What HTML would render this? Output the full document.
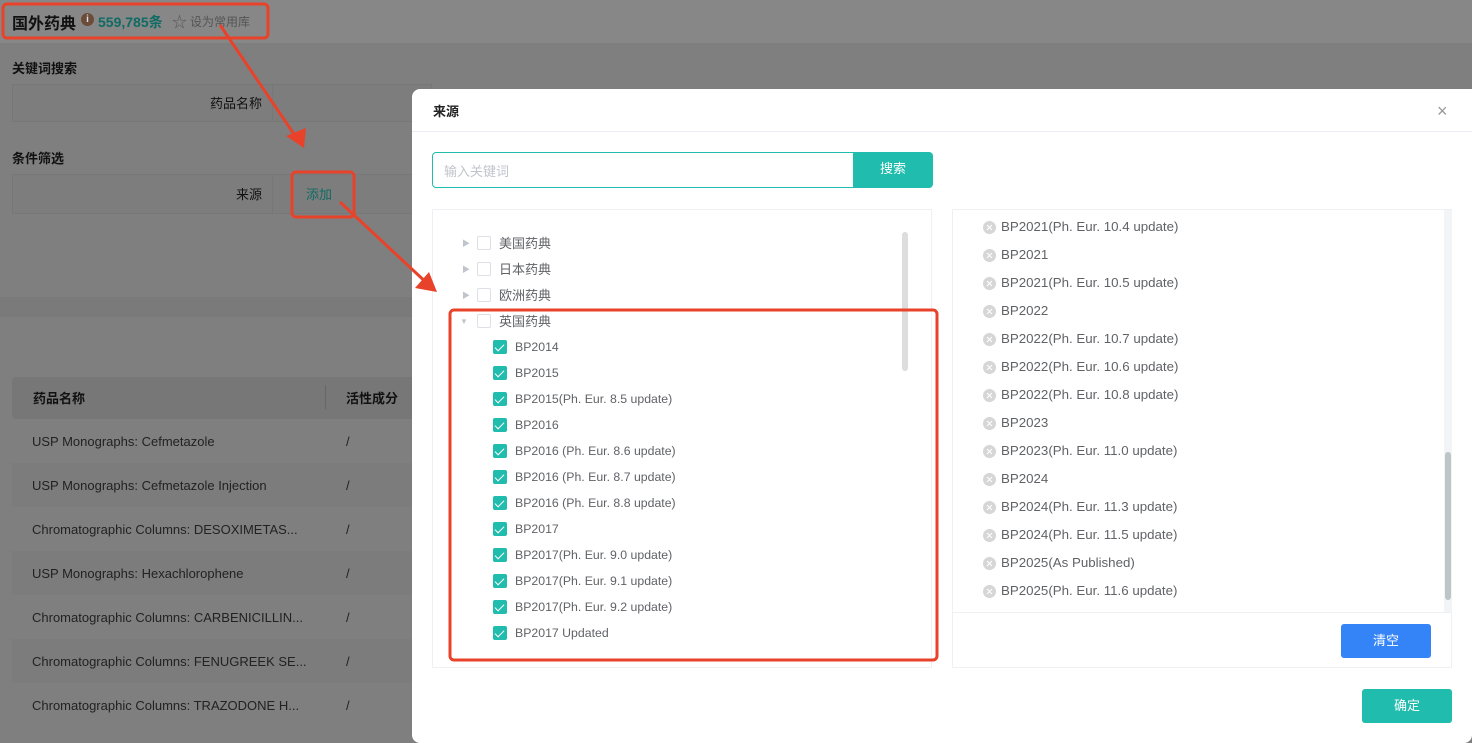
<!DOCTYPE html>
<html><head><meta charset="utf-8"><style>
*{margin:0;padding:0;box-sizing:border-box}
body{width:1472px;height:743px;overflow:hidden;background:#7f7f7f;font-family:"Liberation Sans","Noto Sans CJK SC",sans-serif;position:relative;color:#1a1a1a}
.a{position:absolute;white-space:nowrap}
.cb{position:absolute;width:14px;height:14px;border-radius:2px;background:#20bcad}
.cb::after{content:"";position:absolute;left:4px;top:1.5px;width:4px;height:8px;border:solid #fff;border-width:0 1.5px 1.5px 0;transform:rotate(45deg)}
.ub{position:absolute;width:14px;height:14px;border:1px solid #dcdfe6;border-radius:2px;background:#fff}
.t{font-size:12.3px;color:#606266}
.c{font-size:13px;color:#606266}
.x{position:absolute;width:13px;height:13px;border-radius:50%;background:#d6d6d6}
.x::before,.x::after{content:"";position:absolute;left:6px;top:3px;width:1px;height:7px;background:#fff;transform:rotate(45deg)}
.x::after{transform:rotate(-45deg)}
.r{font-size:13.3px;color:#606266}
</style></head><body>
<div class="a" style="left:0;top:0;width:1472px;height:43px;background:#878787"></div>
<div class="a" style="left:12px;top:10px;font-size:16px;font-weight:bold;color:#111">国外药典</div>
<div class="a" style="left:81px;top:13px;width:13px;height:13px;border-radius:50%;background:#6b4b3a;color:#ddd;font-size:10px;text-align:center;line-height:13px;font-weight:bold">i</div>
<div class="a" style="left:98px;top:12px;font-size:14px;font-weight:bold;color:#0f6b63">559,785条</div>
<div class="a" style="left:172px;top:11px;font-size:15px;color:#555">☆</div>
<div class="a" style="left:190px;top:13px;font-size:12px;color:#555">设为常用库</div>
<div class="a" style="left:12px;top:58px;font-size:13px;font-weight:bold;color:#111">关键词搜索</div>
<div class="a" style="left:12px;top:84px;width:420px;height:38px;border:1px solid #777;background:#7d7d7d"></div>
<div class="a" style="left:272px;top:84px;width:1px;height:38px;background:#777"></div>
<div class="a" style="left:210px;top:93px;font-size:13px;color:#111">药品名称</div>
<div class="a" style="left:12px;top:148px;font-size:13px;font-weight:bold;color:#111">条件筛选</div>
<div class="a" style="left:12px;top:174px;width:420px;height:40px;border:1px solid #777;background:#7d7d7d"></div>
<div class="a" style="left:272px;top:174px;width:1px;height:40px;background:#777"></div>
<div class="a" style="left:236px;top:184px;font-size:13px;color:#111">来源</div>
<div class="a" style="left:306px;top:184px;font-size:13px;color:#0f6b63">添加</div>
<div class="a" style="left:0;top:297px;width:420px;height:20px;background:#7a7a7a"></div>
<div class="a" style="left:12px;top:377px;width:410px;height:42px;background:#777;border-radius:4px 0 0 4px"></div>
<div class="a" style="left:325px;top:385px;width:1px;height:24px;background:#666"></div>
<div class="a" style="left:33px;top:388px;font-size:13px;font-weight:bold;color:#111">药品名称</div>
<div class="a" style="left:346px;top:388px;font-size:13px;font-weight:bold;color:#111">活性成分</div>
<div class="a" style="left:12px;top:463px;width:410px;height:44px;background:#7c7c7c"></div>
<div class="a" style="left:12px;top:551px;width:410px;height:44px;background:#7c7c7c"></div>
<div class="a" style="left:12px;top:639px;width:410px;height:44px;background:#7c7c7c"></div>
<div class="a" style="left:32px;top:434px;font-size:13px;color:#222">USP Monographs: Cefmetazole</div>
<div class="a" style="left:32px;top:478px;font-size:13px;color:#222">USP Monographs: Cefmetazole Injection</div>
<div class="a" style="left:32px;top:522px;font-size:13px;color:#222">Chromatographic Columns: DESOXIMETAS...</div>
<div class="a" style="left:32px;top:566px;font-size:13px;color:#222">USP Monographs: Hexachlorophene</div>
<div class="a" style="left:32px;top:610px;font-size:13px;color:#222">Chromatographic Columns: CARBENICILLIN...</div>
<div class="a" style="left:32px;top:654px;font-size:13px;color:#222">Chromatographic Columns: FENUGREEK SE...</div>
<div class="a" style="left:32px;top:698px;font-size:13px;color:#222">Chromatographic Columns: TRAZODONE H...</div>
<div class="a" style="left:346px;top:434px;font-size:13px;color:#222">/</div>
<div class="a" style="left:346px;top:478px;font-size:13px;color:#222">/</div>
<div class="a" style="left:346px;top:522px;font-size:13px;color:#222">/</div>
<div class="a" style="left:346px;top:566px;font-size:13px;color:#222">/</div>
<div class="a" style="left:346px;top:610px;font-size:13px;color:#222">/</div>
<div class="a" style="left:346px;top:654px;font-size:13px;color:#222">/</div>
<div class="a" style="left:346px;top:698px;font-size:13px;color:#222">/</div>

<div class="a" style="left:412px;top:89px;width:1060px;height:654px;background:#fff;border-radius:8px 0 8px 8px"></div>
<div class="a" style="left:433px;top:101px;font-size:13px;font-weight:bold;color:#222">来源</div>
<div class="a" style="left:1437px;top:101px;font-size:18px;color:#999">×</div>
<div class="a" style="left:412px;top:131px;width:1060px;height:1px;background:#ebeef5"></div>
<div class="a" style="left:432px;top:152px;width:500px;height:36px;border:1px solid #20bcad;border-radius:4px"></div>
<div class="a" style="left:444px;top:161px;font-size:13px;color:#c0c4cc">输入关键词</div>
<div class="a" style="left:853px;top:152px;width:80px;height:36px;background:#20bcad;border-radius:0 4px 4px 0;color:#fff;font-size:13px;text-align:center;line-height:34px">搜索</div>

<div class="a" style="left:432px;top:209px;width:500px;height:459px;border:1px solid #eef0f3"></div>
<div class="a" style="left:902px;top:232px;width:6px;height:139px;background:#ddd;border-radius:3px"></div>
<div class="a" style="left:462px;top:238px;font-size:8px;color:#c0c4cc">▶</div>
<div class="a" style="left:462px;top:264px;font-size:8px;color:#c0c4cc">▶</div>
<div class="a" style="left:462px;top:290px;font-size:8px;color:#c0c4cc">▶</div>
<div class="a" style="left:460px;top:317px;font-size:8px;color:#c0c4cc">▼</div>
<div class="ub" style="left:477px;top:236px"></div>
<div class="ub" style="left:477px;top:262px"></div>
<div class="ub" style="left:477px;top:288px"></div>
<div class="ub" style="left:477px;top:314px"></div>
<div class="a c" style="left:499px;top:233px">美国药典</div>
<div class="a c" style="left:499px;top:259px">日本药典</div>
<div class="a c" style="left:499px;top:285px">欧洲药典</div>
<div class="a c" style="left:499px;top:311px">英国药典</div>
<div class="cb" style="left:493px;top:340px"></div><div class="a t" style="left:515px;top:340px">BP2014</div>
<div class="cb" style="left:493px;top:366px"></div><div class="a t" style="left:515px;top:366px">BP2015</div>
<div class="cb" style="left:493px;top:392px"></div><div class="a t" style="left:515px;top:392px">BP2015(Ph. Eur. 8.5 update)</div>
<div class="cb" style="left:493px;top:418px"></div><div class="a t" style="left:515px;top:418px">BP2016</div>
<div class="cb" style="left:493px;top:444px"></div><div class="a t" style="left:515px;top:444px">BP2016 (Ph. Eur. 8.6 update)</div>
<div class="cb" style="left:493px;top:470px"></div><div class="a t" style="left:515px;top:470px">BP2016 (Ph. Eur. 8.7 update)</div>
<div class="cb" style="left:493px;top:496px"></div><div class="a t" style="left:515px;top:496px">BP2016 (Ph. Eur. 8.8 update)</div>
<div class="cb" style="left:493px;top:522px"></div><div class="a t" style="left:515px;top:522px">BP2017</div>
<div class="cb" style="left:493px;top:548px"></div><div class="a t" style="left:515px;top:548px">BP2017(Ph. Eur. 9.0 update)</div>
<div class="cb" style="left:493px;top:574px"></div><div class="a t" style="left:515px;top:574px">BP2017(Ph. Eur. 9.1 update)</div>
<div class="cb" style="left:493px;top:600px"></div><div class="a t" style="left:515px;top:600px">BP2017(Ph. Eur. 9.2 update)</div>
<div class="cb" style="left:493px;top:626px"></div><div class="a t" style="left:515px;top:626px">BP2017 Updated</div>

<div class="a" style="left:952px;top:209px;width:500px;height:459px;border:1px solid #eef0f3"></div>
<div class="a" style="left:952px;top:612px;width:500px;height:1px;background:#eef0f3"></div>
<div class="a" style="left:1444px;top:210px;width:8px;height:402px;background:#f3f4f5"></div>
<div class="a" style="left:1445px;top:452px;width:6px;height:148px;background:#bcc6c6;border-radius:3px"></div>
<div class="x" style="left:983px;top:221px"></div><div class="a r" style="left:1001px;top:219px">BP2021(Ph. Eur. 10.4 update)</div>
<div class="x" style="left:983px;top:249px"></div><div class="a r" style="left:1001px;top:247px">BP2021</div>
<div class="x" style="left:983px;top:277px"></div><div class="a r" style="left:1001px;top:275px">BP2021(Ph. Eur. 10.5 update)</div>
<div class="x" style="left:983px;top:305px"></div><div class="a r" style="left:1001px;top:303px">BP2022</div>
<div class="x" style="left:983px;top:333px"></div><div class="a r" style="left:1001px;top:331px">BP2022(Ph. Eur. 10.7 update)</div>
<div class="x" style="left:983px;top:361px"></div><div class="a r" style="left:1001px;top:359px">BP2022(Ph. Eur. 10.6 update)</div>
<div class="x" style="left:983px;top:389px"></div><div class="a r" style="left:1001px;top:387px">BP2022(Ph. Eur. 10.8 update)</div>
<div class="x" style="left:983px;top:417px"></div><div class="a r" style="left:1001px;top:415px">BP2023</div>
<div class="x" style="left:983px;top:445px"></div><div class="a r" style="left:1001px;top:443px">BP2023(Ph. Eur. 11.0 update)</div>
<div class="x" style="left:983px;top:473px"></div><div class="a r" style="left:1001px;top:471px">BP2024</div>
<div class="x" style="left:983px;top:501px"></div><div class="a r" style="left:1001px;top:499px">BP2024(Ph. Eur. 11.3 update)</div>
<div class="x" style="left:983px;top:529px"></div><div class="a r" style="left:1001px;top:527px">BP2024(Ph. Eur. 11.5 update)</div>
<div class="x" style="left:983px;top:557px"></div><div class="a r" style="left:1001px;top:555px">BP2025(As Published)</div>
<div class="x" style="left:983px;top:585px"></div><div class="a r" style="left:1001px;top:583px">BP2025(Ph. Eur. 11.6 update)</div>
<div class="a" style="left:1341px;top:624px;width:90px;height:34px;background:#3484f8;border-radius:3px;color:#fff;font-size:13px;text-align:center;line-height:34px">清空</div>
<div class="a" style="left:1362px;top:689px;width:90px;height:34px;background:#20bcad;border-radius:3px;color:#fff;font-size:13px;text-align:center;line-height:34px">确定</div>

<svg class="a" style="left:0;top:0" width="1472" height="743">
<g fill="none" stroke="#e8432a" stroke-width="3">
<rect x="3" y="4" width="265" height="34" rx="4"/>
<rect x="292" y="172" width="62" height="45" rx="4"/>
<rect x="450" y="310" width="487" height="350" rx="4"/>
<line x1="220" y1="25" x2="298" y2="140"/>
<line x1="340" y1="202" x2="430" y2="286"/>
</g>
<polygon points="304,148 286,136 306,128" fill="#e8432a"/>
<polygon points="437,292 415,288 429,272" fill="#e8432a"/>
</svg>
</body></html>
